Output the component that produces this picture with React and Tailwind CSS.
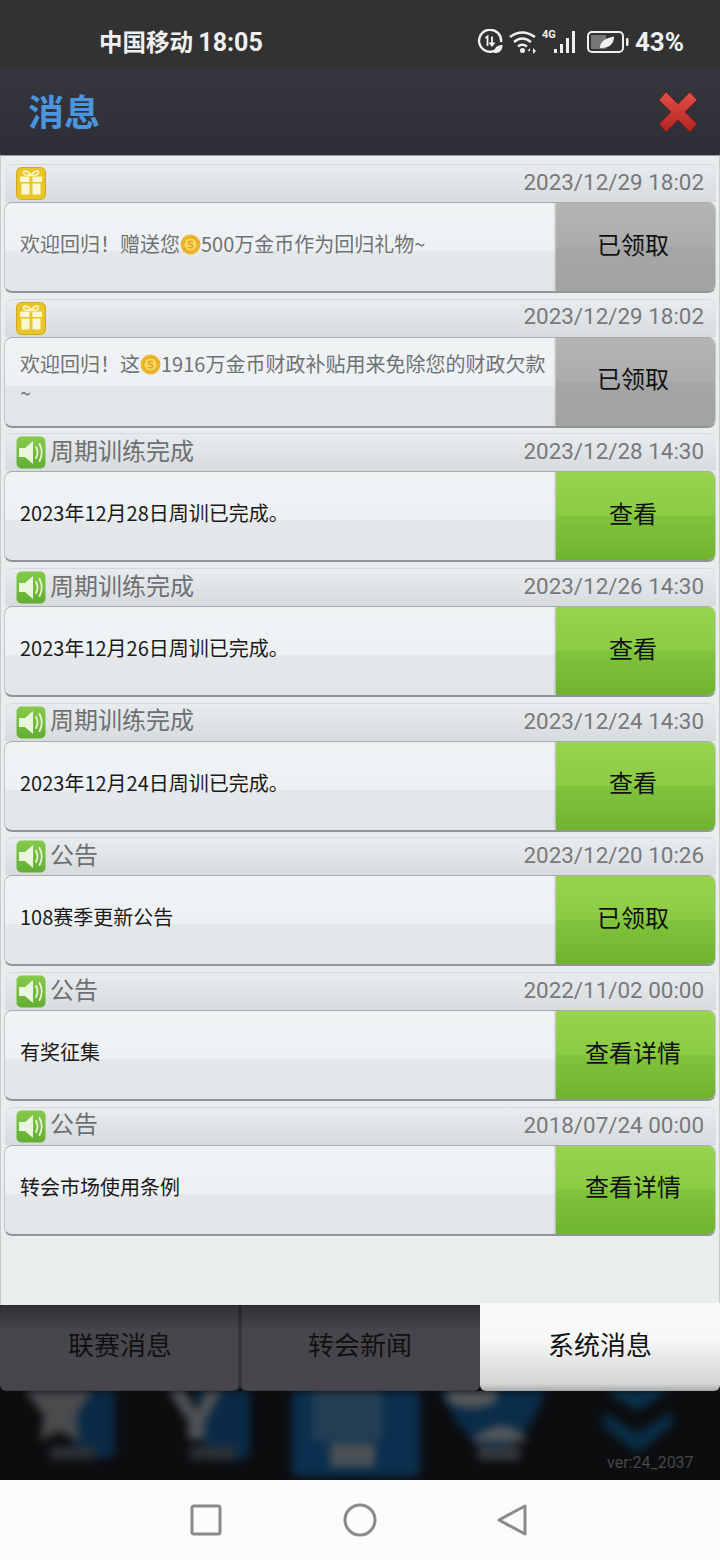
import React from "react";

const CJK = "font-['Noto_Sans_CJK_SC','Noto_Sans',sans-serif]";

const messages = [
  { type: "gift", date: "2023/12/29 18:02", body: ["欢迎回归！赠送您", "coin", "500万金币作为回归礼物~"], action: "已领取", off: true },
  { type: "gift", date: "2023/12/29 18:02", body: ["欢迎回归！这", "coin", "1916万金币财政补贴用来免除您的财政欠款", "br", "~"], action: "已领取", off: true },
  { type: "sound", title: "周期训练完成", date: "2023/12/28 14:30", body: ["2023年12月28日周训已完成。"], action: "查看" },
  { type: "sound", title: "周期训练完成", date: "2023/12/26 14:30", body: ["2023年12月26日周训已完成。"], action: "查看" },
  { type: "sound", title: "周期训练完成", date: "2023/12/24 14:30", body: ["2023年12月24日周训已完成。"], action: "查看" },
  { type: "sound", title: "公告", date: "2023/12/20 10:26", body: ["108赛季更新公告"], action: "已领取" },
  { type: "sound", title: "公告", date: "2022/11/02 00:00", body: ["有奖征集"], action: "查看详情" },
  { type: "sound", title: "公告", date: "2018/07/24 00:00", body: ["转会市场使用条例"], action: "查看详情" },
];

const GiftIcon = () => (
  <svg width="30" height="33" viewBox="0 0 30 33" className="shrink-0">
    <rect x="0.5" y="0.5" width="29" height="32" rx="5" fill="#e8c62a" stroke="#d2a91c" />
    <path d="M15 8 C10 2 6 4 8 7 C9 8.5 12 8.5 15 8 C18 8.5 21 8.5 22 7 C24 4 20 2 15 8" fill="none" stroke="#fdf3c0" strokeWidth="1.6" />
    <rect x="4" y="9.5" width="22" height="5.5" rx="1" fill="#fdf6d2" />
    <rect x="5.5" y="16.5" width="8" height="11" fill="#fdf6d2" />
    <rect x="16.5" y="16.5" width="8" height="11" fill="#fdf6d2" />
    <rect x="13.5" y="9.5" width="3" height="5.5" fill="#e8c62a" />
  </svg>
);

const SoundIcon = () => (
  <svg width="30" height="33" viewBox="0 0 30 33" className="shrink-0">
    <defs>
      <linearGradient id="sg" x1="0" y1="0" x2="0" y2="1">
        <stop offset="0" stopColor="#86ca4c" />
        <stop offset="1" stopColor="#62ae32" />
      </linearGradient>
    </defs>
    <rect x="0.5" y="0.5" width="29" height="32" rx="5" fill="url(#sg)" />
    <path d="M3 12 H9 L17 5 V28 L9 21 H3 Z" fill="#e9f5dc" />
    <path d="M20 11 Q23 16.5 20 22" fill="none" stroke="#e9f5dc" strokeWidth="1.8" strokeLinecap="round" />
    <path d="M23.5 8 Q28 16.5 23.5 25" fill="none" stroke="#e9f5dc" strokeWidth="1.8" strokeLinecap="round" />
  </svg>
);

const Coin = () => (
  <svg width="21" height="21" viewBox="0 0 20 20" className="inline-block align-[-3px]">
    <circle cx="10" cy="10" r="9.5" fill="#eeb52c" />
    <circle cx="10" cy="10" r="6.5" fill="#f8d65a" stroke="#e2a526" />
    <path d="M12.3 7.4 C11 6.2 8 6.6 8.2 8.4 C8.4 10.2 12 9.6 12 11.6 C12 13.4 9 13.8 7.6 12.5" fill="none" stroke="#d99a20" strokeWidth="1.2" />
  </svg>
);

const CloseIcon = () => (
  <svg width="40" height="42" viewBox="0 0 40 42">
    <defs>
      <linearGradient id="xg" x1="0" y1="0" x2="0" y2="1">
        <stop offset="0" stopColor="#e25048" />
        <stop offset="1" stopColor="#b02420" />
      </linearGradient>
    </defs>
    <path d="M8 1 L20 13 L32 1 L39 9 L27 21 L39 33 L32 41 L20 29 L8 41 L1 33 L13 21 L1 9 Z" fill="url(#xg)" stroke="#7c1c1a" strokeWidth="1" />
  </svg>
);

const StatusIcons = () => (
  <div className="flex items-center -mt-[2px] text-[#f0f0f0]">
    <svg width="26" height="26" viewBox="0 0 26 26" className="mr-[6px]">
      <path d="M19 21 A11 11 0 1 1 24 13" fill="none" stroke="currentColor" strokeWidth="2.4" />
      <path d="M8.5 9 L10.5 7.5 V17 M15 7.5 V16 M12.5 13.5 L15 16.5 L17.5 13.5" fill="none" stroke="currentColor" strokeWidth="1.8" />
      <path d="M17 24 C17 18 21 16 25.5 16 C25.5 22 22 24.5 17 24 Z" fill="currentColor" />
    </svg>
    <svg width="28" height="24" viewBox="0 0 28 24" className="mr-[5px]">
      <path d="M1 7 Q13 -2 26 7 M5 12 Q13 5 22 12 M9 16.5 Q13 13 18 16.5" fill="none" stroke="currentColor" strokeWidth="2.6" />
      <circle cx="13.5" cy="20.5" r="2.5" fill="currentColor" />
      <path d="M21 18 L18.5 21 H21 Z M24 18 V24 L27 21 Z" fill="currentColor" />
    </svg>
    <div className="relative w-[37px] h-[24px] mr-[8px]">
      <span className="absolute left-0 top-[-2px] text-[11px] leading-[14px] font-bold font-['Roboto',sans-serif]">4G</span>
      <svg width="37" height="24" viewBox="0 0 37 24">
        <rect x="12" y="19" width="3" height="4" fill="currentColor" />
        <rect x="18" y="14" width="3" height="9" fill="currentColor" />
        <rect x="24" y="8" width="3" height="15" fill="currentColor" />
        <rect x="30" y="1" width="3" height="22" fill="currentColor" />
      </svg>
    </div>
    <svg width="42" height="24" viewBox="0 0 42 24" className="mr-[6px]">
      <rect x="1" y="2" width="35" height="20" rx="4" fill="none" stroke="currentColor" strokeWidth="2" />
      <rect x="4" y="5" width="15" height="14" rx="1" fill="#777" />
      <path d="M13 18 C13 11 19 8 27 6.5 C27 14 22 18.5 13 18 Z" fill="currentColor" />
      <rect x="39" y="8" width="2.5" height="8" rx="1" fill="currentColor" />
    </svg>
    <span className="text-[26px] leading-none font-bold font-['Roboto',sans-serif]">43%</span>
  </div>
);

const MessageRow = ({ msg }) => (
  <div className="h-[134.7px] shrink-0">
    <div className="h-[38px] ml-[5px] mr-[4px] pl-[11px] pr-[12px] flex items-center rounded-t-[8px] border-t border-[#d6d9db] bg-[linear-gradient(to_bottom,#e9ecee,#d8dbdd)]">
      {msg.type === "gift" ? <GiftIcon /> : <SoundIcon />}
      {msg.title && <span className={`ml-[4px] pb-[6px] text-[24px] leading-none text-[#6d7073] ${CJK}`}>{msg.title}</span>}
      <span className="ml-auto pb-[3px] text-[22.4px] leading-none text-[#77797c] font-['Roboto',sans-serif]">{msg.date}</span>
    </div>
    <div className="h-[91px] ml-[4px] mr-[4px] flex rounded-[8px] overflow-hidden border border-t-[#a9acae] border-x-[#c4c7c9] border-b-2 border-b-[#929597] bg-[linear-gradient(to_bottom,#f0f3f4_0%,#eef1f3_54%,#e5e8ea_54%,#e3e6e8_100%)]">
      <div className={`flex-1 min-w-0 pl-[15px] pr-[8px] pb-[7px] flex items-center text-[20px] leading-[29px] ${msg.off ? "text-[#6f7274]" : "text-[#1a1a1a]"} ${CJK}`}>
        <p>
          {msg.body.map((part, i) => {
            if (part === "coin") return <Coin key={i} />;
            if (part === "br") return <br key={i} />;
            return <span key={i}>{part}</span>;
          })}
        </p>
      </div>
      <div
        className={`w-[159px] shrink-0 pb-[7px] pr-[5px] flex items-center justify-center text-[24px] text-[#111] shadow-[-1px_0_2px_rgba(0,0,0,0.25)] ${CJK} ${
          msg.off
            ? "bg-[linear-gradient(to_bottom,#b4b4b4_0%,#acacac_50%,#a6a6a6_50%,#a2a2a2_100%)]"
            : "bg-[linear-gradient(to_bottom,#98d34e_0%,#8bcb44_50%,#80c33c_50%,#6fb431_100%)]"
        }`}
      >
        {msg.action}
      </div>
    </div>
  </div>
);

const BlurredBackdrop = () => (
  <svg width="720" height="89" viewBox="0 0 720 89" className="blur-[4px] block">
    <path d="M60 0 H115 V65 Q100 72 75 60 Z" fill="#0a2a46" />
    <path d="M25 0 H92 L76 25 L80 50 L58 40 L40 50 L44 25 Z" fill="#494b4d" />
    <rect x="50" y="55" width="45" height="14" fill="#2c3034" />
    <path d="M195 0 H250 V65 Q225 78 205 60 Z" fill="#0a2a46" />
    <path d="M168 0 H185 L197 20 L207 0 H222 L205 30 V48 H188 V30 Z" fill="#505356" />
    <rect x="190" y="55" width="45" height="14" fill="#2c3034" />
    <rect x="292" y="0" width="128" height="86" rx="6" fill="#0b2f4e" />
    <rect x="312" y="0" width="70" height="50" fill="#233e54" />
    <rect x="330" y="52" width="45" height="24" rx="4" fill="#4b5054" />
    <path d="M440 0 H545 Q535 40 495 68 Q460 45 440 0 Z" fill="#0a2c48" />
    <ellipse cx="472" cy="6" rx="26" ry="11" fill="#55585b" />
    <path d="M470 50 Q505 20 528 50 Z" fill="#55585b" />
    <rect x="478" y="55" width="42" height="14" fill="#363a3d" />
    <path d="M605 0 H670 L637 20 Z" fill="#0a324c" />
    <path d="M603 20 L637 42 L672 20 V35 L637 62 L603 35 Z" fill="#092e46" />
  </svg>
);

const NavBar = () => (
  <div className="h-[80px] pl-[190px] bg-[#fcfcfc] flex items-center text-[#8a8a8a]">
    <svg width="32" height="32" viewBox="0 0 32 32" className="shrink-0">
      <rect x="2" y="2" width="28" height="28" rx="2" fill="none" stroke="currentColor" strokeWidth="3" />
    </svg>
    <svg width="34" height="34" viewBox="0 0 34 34" className="shrink-0 ml-[121px]">
      <circle cx="17" cy="17" r="15" fill="none" stroke="currentColor" strokeWidth="3" />
    </svg>
    <svg width="32" height="34" viewBox="0 0 32 34" className="shrink-0 ml-[119px]">
      <path d="M29 3 V31 L3 17 Z" fill="none" stroke="currentColor" strokeWidth="3" strokeLinejoin="round" />
    </svg>
  </div>
);

export default function App() {
  return (
    <div className={`w-[720px] h-[1560px] flex flex-col overflow-hidden bg-[#0c0d0f] ${CJK}`}>
      {/* status bar */}
      <div className="h-[69px] shrink-0 bg-[#323232] pl-[99px] pr-[36px] pt-[16px] flex items-center justify-between text-[#f0f0f0]">
        <span className={`text-[23.5px] font-bold leading-none ${CJK}`}>
          中国移动 <span className="font-['Roboto',sans-serif] text-[25px]">18:05</span>
        </span>
        <StatusIcons />
      </div>

      {/* title */}
      <div className="h-[86px] shrink-0 pl-[28px] pr-[22px] flex items-center justify-between bg-[linear-gradient(to_bottom,#36363f,#2e2e36)]">
        <span className="pb-[4px] text-[36px] font-bold leading-none text-[#4a95dc]">消息</span>
        <CloseIcon />
      </div>

      {/* list */}
      <div className="h-[1150px] shrink-0 flex flex-col pt-[8px] bg-[#eaedee] border-t border-[#9b9ea0] border-x border-x-[#c9cccd]">
        <div className="-mx-px flex flex-col">
          {messages.map((m, i) => (
            <MessageRow key={i} msg={m} />
          ))}
        </div>
      </div>

      {/* tabs */}
      <div className="h-[86px] shrink-0 flex bg-[#0c0d0f] relative z-10 text-[26px] leading-none">
        <div className="w-[240px] pb-[8px] flex items-center justify-center rounded-b-[6px] text-[#111] shadow-[inset_-1px_0_2px_rgba(0,0,0,0.4)] bg-[linear-gradient(to_bottom,#2f2f35,#47464d_30%,#47464d_100%)]">
          联赛消息
        </div>
        <div className="w-[240px] pb-[8px] flex items-center justify-center rounded-b-[6px] text-[#111] shadow-[inset_1px_0_2px_rgba(0,0,0,0.4)] bg-[linear-gradient(to_bottom,#2f2f35,#47464d_30%,#47464d_100%)]">
          转会新闻
        </div>
        <div className="w-[240px] -mt-[2px] pb-[6px] flex items-center justify-center rounded-b-[6px] text-[#111] bg-[linear-gradient(to_bottom,#f8faf9_0%,#f6f8f7_40%,#d3d5d5_92%,#a8aaaa_100%)]">
          系统消息
        </div>
      </div>

      {/* blurred game screen behind the dialog */}
      <div className="h-[89px] shrink-0 relative overflow-hidden bg-[#0c0d0f]">
        <BlurredBackdrop />
        <span className="absolute left-[607px] top-[62px] text-[16px] leading-[20px] text-[#45474a] font-['Roboto',sans-serif]">
          ver:24_2037
        </span>
      </div>

      <NavBar />
    </div>
  );
}
